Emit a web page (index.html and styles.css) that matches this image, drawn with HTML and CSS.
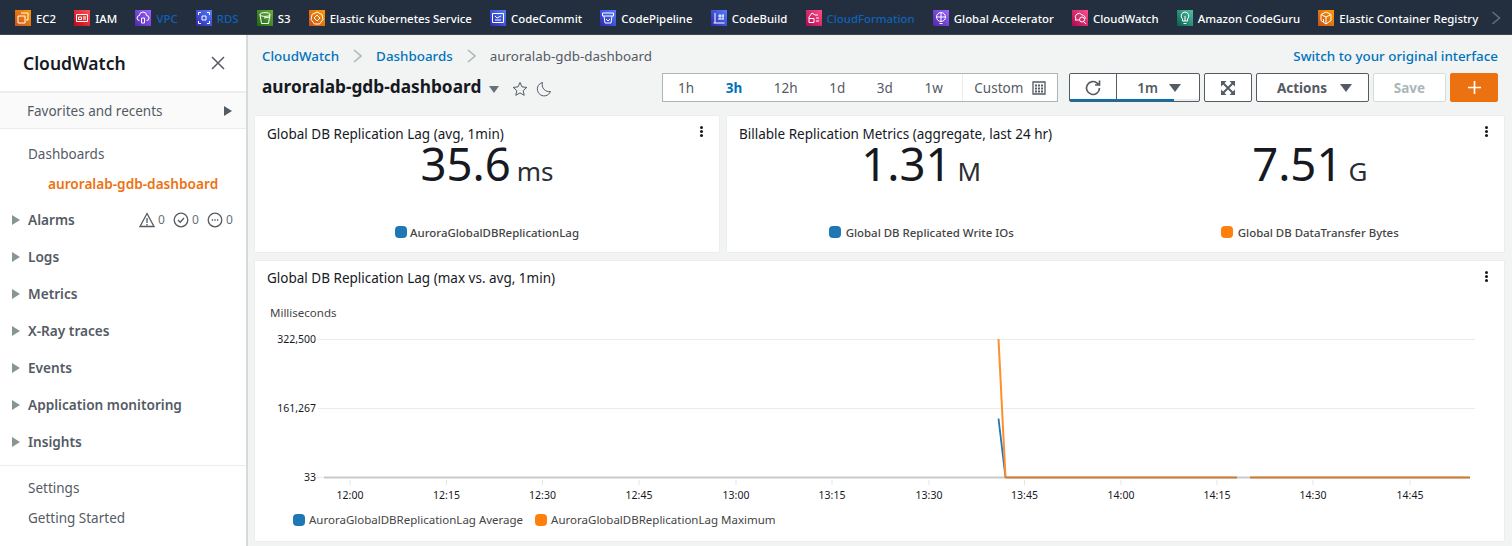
FILE: index.html
```html
<!DOCTYPE html>
<html lang="en">
<head>
<meta charset="utf-8">
<title>CloudWatch</title>
<link rel="stylesheet" href="styles.css">
</head>
<body>
<nav class="topbar">
  <a class="svc"><svg class="ico orange" viewBox="0 0 16 16"><path d="M6 3h7v7h-2M3 6h7v7H3z"/></svg><span>EC2</span></a>
  <a class="svc"><svg class="ico red" viewBox="0 0 16 16"><path d="M2.5 4.500h11v7h-11zM4.500 7h3v2.500h-3zM9 7h3M9 9h3"/></svg><span>IAM</span></a>
  <a class="svc"><svg class="ico violet" viewBox="0 0 16 16"><path d="M4.500 10.500a2.500 2.500 0 0 1 0-5 3.500 3.500 0 0 1 7 0 2.500 2.500 0 0 1 0 5M6.500 8v5h3V8z"/></svg><span class="dim">VPC</span></a>
  <a class="svc"><svg class="ico blue" viewBox="0 0 16 16"><path d="M6 6h4v4H6zM2.500 5V2.500H5M11 2.500h2.500V5M13.500 11v2.500H11M5 13.500H2.500V11"/></svg><span class="dim">RDS</span></a>
  <a class="svc"><svg class="ico green" viewBox="0 0 16 16"><path d="M3 4.500c0-2.500 10-2.500 10 0l-1.500 9h-7zM3 4.500c0 2.500 10 2.500 10 0M7 8l6-1"/></svg><span>S3</span></a>
  <a class="svc"><svg class="ico orange" viewBox="0 0 16 16"><path d="M8 2l5 2.500 1 5-3.500 4.500h-5L2 9.500l1-5zM8 5l3 3-3 3-3-3z"/></svg><span>Elastic Kubernetes Service</span></a>
  <a class="svc"><svg class="ico blue" viewBox="0 0 16 16"><path d="M2.500 3.500h11v9h-11zM5 6l2 2 4-2M5 10h6"/></svg><span>CodeCommit</span></a>
  <a class="svc"><svg class="ico blue" viewBox="0 0 16 16"><path d="M2.500 3h11v3h-11zM4 6l1 7h6l1-7M6 9l2 2 2-2"/></svg><span>CodePipeline</span></a>
  <a class="svc"><svg class="ico blue" viewBox="0 0 16 16"><path d="M4 3v10M2.500 13h11M7 6h6M7 9h6M9 4v5M12 4v5"/></svg><span>CodeBuild</span></a>
  <a class="svc"><svg class="ico pink" viewBox="0 0 16 16"><path d="M3 8.500V7l3-4 3 2h3M3 8.500h5v4H3zM10 8h3M10 11h3"/></svg><span class="dim">CloudFormation</span></a>
  <a class="svc"><svg class="ico violet" viewBox="0 0 16 16"><path d="M8 2.500a4.500 4.500 0 1 1 0 9 4.500 4.500 0 0 1 0-9zM8 2.500v9M3.500 7h9M6.500 13.500h3"/></svg><span>Global Accelerator</span></a>
  <a class="svc"><svg class="ico pink" viewBox="0 0 16 16"><path d="M3 10l1-1a3.500 3.500 0 0 1 6-4 3 3 0 0 1 3 4M3 10h5M10 7a2.500 2.500 0 1 0 .1 5 2.500 2.500 0 0 0-.1-5zM12 12l2 2"/></svg><span>CloudWatch</span></a>
  <a class="svc"><svg class="ico teal" viewBox="0 0 16 16"><path d="M8 2a4 4 0 0 1 2.500 7v2h-5V9A4 4 0 0 1 8 2zM6.500 13.500h3M8 6v5"/></svg><span>Amazon CodeGuru</span></a>
  <a class="svc"><svg class="ico orange" viewBox="0 0 16 16"><path d="M8 2l5 2.500v6L8 14l-5-3.500v-6zM3 4.500L8 7l5-2.500M8 7v7M5.500 9v3"/></svg><span>Elastic Container Registry</span></a>
  <svg class="more" viewBox="0 0 10 14"><path d="M1.500 1l7 6-7 6"/></svg>
</nav>

<div class="shell">
  <aside class="side">
    <header class="side-head">
      <h2>CloudWatch</h2>
      <svg class="close" viewBox="0 0 14 14"><path d="M1 1l12 12M13 1L1 13"/></svg>
    </header>
    <div class="favs"><span>Favorites and recents</span><i class="tri tri-dark"></i></div>
    <div class="links first">
      <a class="link">Dashboards</a>
      <a class="link current">auroralab-gdb-dashboard</a>
    </div>
    <ul class="groups">
      <li class="group"><i class="tri"></i><span>Alarms</span>
        <div class="alarms">
          <svg viewBox="0 0 16 16"><path d="M8 1.500L15 14.500H1zM8 6v5M8 12v1.500"/></svg><b>0</b>
          <svg viewBox="0 0 16 16"><circle cx="8" cy="8" r="6.800"/><path d="M5 8l2.200 2.200L11 6"/></svg><b>0</b>
          <svg viewBox="0 0 16 16"><circle cx="8" cy="8" r="6.800"/><path class="dots" d="M4.700 8h1.400M7.300 8h1.400M9.900 8h1.400"/></svg><b>0</b>
        </div>
      </li>
      <li class="group"><i class="tri"></i><span>Logs</span></li>
      <li class="group"><i class="tri"></i><span>Metrics</span></li>
      <li class="group"><i class="tri"></i><span>X-Ray traces</span></li>
      <li class="group"><i class="tri"></i><span>Events</span></li>
      <li class="group"><i class="tri"></i><span>Application monitoring</span></li>
      <li class="group"><i class="tri"></i><span>Insights</span></li>
    </ul>
    <div class="links last">
      <a class="link">Settings</a>
      <a class="link">Getting Started</a>
    </div>
  </aside>

  <main class="main">
    <div class="crumbs">
      <a>CloudWatch</a><svg class="sep" viewBox="0 0 9 14"><path d="M1 1l7 6-7 6"/></svg>
      <a>Dashboards</a><svg class="sep" viewBox="0 0 9 14"><path d="M1 1l7 6-7 6"/></svg>
      <span>auroralab-gdb-dashboard</span>
      <a class="switch">Switch to your original interface</a>
    </div>
    <div class="toolbar">
      <h1>auroralab-gdb-dashboard</h1>
      <i class="down title-down"></i>
      <svg class="star" viewBox="0 0 16 16"><path d="M8 1.500l2 4.400 4.800.5-3.600 3.200 1 4.700L8 11.900l-4.200 2.400 1-4.700L1.200 6.400 6 5.900z"/></svg>
      <svg class="moon" viewBox="0 0 16 16"><path d="M6.500 1.500a6.800 6.800 0 1 0 8 9 7 7 0 0 1-8-9z"/></svg>
      <div class="range">
        <span>1h</span><span class="on">3h</span><span>12h</span><span>1d</span><span>3d</span><span>1w</span>
        <span class="custom">Custom
          <svg viewBox="0 0 14 14"><path class="cal" d="M1 1h12v12H1z"/><path class="calg" d="M3 4.500h2M6 4.500h2M9 4.500h2M3 7.500h2M6 7.500h2M9 7.500h2M3 10.500h2M6 10.500h2M9 10.500h2"/></svg>
        </span>
      </div>
      <div class="refresh">
        <span class="r-btn"><svg viewBox="0 0 18 18"><path d="M15.500 9a6.500 6.500 0 1 1-2-4.700L15.500 6M15.500 1.500V6H11"/></svg></span>
        <span class="r-int">1m <i class="down"></i></span>
      </div>
      <button class="btn icon"><svg viewBox="0 0 16 16"><path class="x" d="M3 3l10 10M13 3L3 13"/><path class="heads" d="M1 1h5.500L1 6.500zM15 1v5.500L9.500 1zM1 15V9.500L6.500 15zM15 15H9.500L15 9.500z"/></svg></button>
      <button class="btn actions">Actions <i class="down"></i></button>
      <button class="btn save">Save</button>
      <button class="btn plus"><svg viewBox="0 0 16 16"><path d="M8 1v14M1 8h14"/></svg></button>
    </div>

    <div class="row">
      <section class="card lag">
        <h3>Global DB Replication Lag (avg, 1min)</h3>
        <i class="kebab"></i>
        <div class="stats">
          <div class="stat"><div class="val">35.6<small>ms</small></div><div class="lg"><i class="sw b"></i>AuroraGlobalDBReplicationLag</div></div>
        </div>
      </section>
      <section class="card bill">
        <h3>Billable Replication Metrics (aggregate, last 24 hr)</h3>
        <i class="kebab"></i>
        <div class="stats">
          <div class="stat"><div class="val">1.31<small>M</small></div><div class="lg"><i class="sw b"></i>Global DB Replicated Write IOs</div></div>
          <div class="stat"><div class="val">7.51<small>G</small></div><div class="lg"><i class="sw o"></i>Global DB DataTransfer Bytes</div></div>
        </div>
      </section>
    </div>

    <section class="card wide">
      <h3>Global DB Replication Lag (max vs. avg, 1min)</h3>
      <i class="kebab"></i>
      <p class="unit">Milliseconds</p>
      <svg class="plot" viewBox="0 -8 1249 184" width="1249" height="184">
        <g class="grid"><path d="M63 5.500h1157M63 74.500h1157"/><path d="M60 143.500h9"/></g>
        <g class="ylab"><text x="61" y="9">322,500</text><text x="61" y="78">161,267</text><text x="61" y="147">33</text></g>
        <path class="baseline" d="M69 143.500H1215"/>
        <g class="ticks"><path d="M95 146v5M191.500 146v5M287.500 146v5M384 146v5M481 146v5M577 146v5M674 146v5M769.500 146v5M866 146v5M962 146v5M1058 146v5M1155 146v5"/></g>
        <g class="xlab"><text x="95" y="165">12:00</text><text x="191.500" y="165">12:15</text><text x="287.500" y="165">12:30</text><text x="384" y="165">12:45</text><text x="481" y="165">13:00</text><text x="577" y="165">13:15</text><text x="674" y="165">13:30</text><text x="769.500" y="165">13:45</text><text x="866" y="165">14:00</text><text x="962" y="165">14:15</text><text x="1058" y="165">14:30</text><text x="1155" y="165">14:45</text></g>
        <path class="ln-b" d="M743.500 84.500L750.500 143.500"/>
        <path class="ln-o" d="M743.500 5L750.500 143.500"/>
        <path class="ln-m" d="M750.500 143.500H982M995 143.500H1215"/>
      </svg>
      <div class="legend">
        <span><i class="sw b"></i>AuroraGlobalDBReplicationLag Average</span>
        <span><i class="sw o"></i>AuroraGlobalDBReplicationLag Maximum</span>
      </div>
    </section>
  </main>
</div>
</body>
</html>
```

FILE: styles.css
```css
* { box-sizing: border-box; }
html, body { margin: 0; height: 100%; overflow: hidden; }
body { font-family: "Noto Sans", "Open Sans", sans-serif; font-size: 14px; color: #16191f; background: #f2f3f3; }
a { cursor: pointer; }

.topbar { height: 35px; background: #232f3e; border-bottom: 1px solid #3c4654; display: flex; align-items: center; padding: 2px 0 0 15px; gap: 18.2px; color: #fff; font-size: 11.4px; font-weight: 500; white-space: nowrap; }
.svc { display: flex; align-items: center; gap: 5px; }
.svc .dim { color: #0f62b8; }
.ico { width: 16px; height: 16px; flex: none; fill: none; stroke: #fff; stroke-width: 1; }
.orange { background: linear-gradient(45deg, #c8511b, #ff9900); }
.red { background: linear-gradient(45deg, #bd0816, #ff5252); }
.violet { background: linear-gradient(45deg, #4d27a8, #a166ff); }
.blue { background: linear-gradient(45deg, #2e27ad, #527fff); }
.green { background: linear-gradient(45deg, #1b660f, #6cae3e); }
.pink { background: linear-gradient(45deg, #b0084d, #ff4f8b); }
.teal { background: linear-gradient(45deg, #055f4e, #56c0a7); }
.more { width: 10px; height: 14px; margin-left: -5px; fill: none; stroke: #687078; stroke-width: 1.500; flex: none; }

.shell { display: flex; height: 511px; }
.side { width: 248px; flex: none; background: #fff; border-right: 2px solid #d5dbdb; color: #545b64; }
.side-head { height: 58px; padding: 0 21px 0 23px; display: flex; align-items: center; justify-content: space-between; border-bottom: 2px solid #eaeded; }
.side-head h2 { margin: 0; font-size: 17.500px; font-weight: 600; color: #16191f; }
.close { width: 14px; height: 14px; fill: none; stroke: #545b64; stroke-width: 1.500; }
.favs { height: 36px; background: #fafafa; border-bottom: 1px solid #eaeded; padding: 0 14px 0 27px; display: flex; align-items: center; justify-content: space-between; font-size: 13.500px; }
.tri { width: 0; height: 0; border-left: 8px solid #879596; border-top: 5px solid transparent; border-bottom: 5px solid transparent; flex: none; }
.tri-dark { border-left-color: #545b64; }
.links { display: flex; flex-direction: column; padding-left: 28px; font-size: 13.500px; }
.link { height: 30px; display: flex; align-items: center; }
.links.first { padding-top: 10px; }
.link.current { color: #ec7211; font-weight: 600; padding-left: 20px; font-size: 13.650px; height: 28px; }
.groups { list-style: none; margin: 0; padding: 4px 0 5px 0; border-bottom: 1px solid #eaeded; }
.group { height: 37px; display: flex; align-items: center; padding-left: 12px; gap: 8px; font-weight: 600; font-size: 13.650px; }
.alarms { margin-left: auto; padding-right: 13px; display: flex; align-items: center; font-weight: 400; font-size: 12px; color: #687078; }
.alarms svg { width: 16px; height: 16px; fill: none; stroke: #545b64; stroke-width: 1.300; margin-right: 3px; }
.alarms b { font-weight: 400; margin-right: 8px; width: 7px; }
.alarms b:last-child { margin-right: 0; }
.dots { stroke-width: 1.500; }
.links.last { padding-top: 7px; }

.main { flex: 1; min-width: 0; padding: 0 8px 0 7px; }
.crumbs { height: 37px; padding: 5px 6px 0 7px; display: flex; align-items: center; font-size: 13.400px; color: #545b64; }
.crumbs a { color: #0073bb; font-weight: 500; }
.sep { width: 9px; height: 14px; margin: 0 14px; fill: none; stroke: #aab7b8; stroke-width: 1.500; flex: none; }
.crumbs .switch { margin-left: auto; }

.toolbar { height: 29px; margin-top: 1px; padding: 0 6px 0 7px; display: flex; align-items: center; }
.toolbar > * { flex: none; }
.toolbar h1 { margin: -2px 0 0; font-size: 17.300px; font-weight: 700; color: #16191f; white-space: nowrap; }
.down { display: inline-block; width: 0; height: 0; border-top: 8px solid #545b64; border-left: 6.500px solid transparent; border-right: 6.500px solid transparent; }
.title-down { margin: 3px 0 0 8px; border-top-width: 7px; border-left-width: 5.500px; border-right-width: 5.500px; border-top-color: #687078; }
.star, .moon { width: 16px; height: 16px; fill: none; stroke: #545b64; stroke-width: 1; margin-top: 2px; }
.star { margin-left: 13px; }
.moon { margin-left: 8px; }
.range { margin-left: auto; width: 396px; height: 29px; background: #fff; border: 1px solid #aab7b8; display: flex; align-items: center; gap: 31.6px; padding-left: 15px; color: #545b64; font-size: 13.500px; }
.range > span { flex: none; padding-top: 1px; }
.range .on { color: #0073bb; font-weight: 700; }
.range .custom { margin-left: -12px; width: 95px; height: 27px; border-left: 1px solid #eaeded; display: flex; align-items: center; justify-content: center; gap: 9px; }
.custom svg { width: 14px; height: 14px; fill: none; stroke: #545b64; }
.custom .cal { stroke-width: 1.300; }
.custom .calg { stroke-width: 2; }
.refresh { margin-left: 11px; width: 131px; height: 29px; display: flex; background: #fff; border: 1px solid #545b64; border-radius: 2px; color: #545b64; font-weight: 600; font-size: 13.500px; box-shadow: inset 0 -2px 0 #eaeded; }
.r-btn { width: 47px; border-right: 1px solid #545b64; display: flex; align-items: center; justify-content: center; box-shadow: inset 0 -2px 0 #0073bb; }
.r-btn svg { width: 18px; height: 18px; fill: none; stroke: #545b64; stroke-width: 1.700; }
.r-int { flex: 1; display: flex; align-items: center; justify-content: center; gap: 11px; padding-left: 2px; background: linear-gradient(#0073bb, #0073bb) left bottom / 70% 2px no-repeat; }
.btn { height: 29px; margin-left: 4px; padding: 0; font: inherit; font-size: 13.500px; font-weight: 700; background: #fff; border: 1px solid #545b64; border-radius: 2px; color: #545b64; display: flex; align-items: center; justify-content: center; }
.btn.icon { width: 48px; }
.btn.icon svg { width: 16px; height: 16px; }
.btn.icon .x { fill: none; stroke: #545b64; stroke-width: 2; }
.btn.icon .heads { fill: #545b64; stroke: none; }
.btn.actions { width: 113px; gap: 13px; padding-left: 4px; }
.btn.save { width: 73px; color: #aab7b8; border-color: #d5dbdb; }
.btn.plus { width: 48px; background: #ec7211; border-color: #ec7211; }
.plus svg { width: 15px; height: 15px; fill: none; stroke: #fff; stroke-width: 1.800; }

.row { display: flex; gap: 8px; margin-top: 14px; }
.card { background: #fff; position: relative; box-shadow: 0 0 1px rgba(0,28,36,.15); }
.card h3 { margin: 0; font-size: 13.500px; font-weight: 400; color: #16191f; padding: 9px 0 0 12px; line-height: 18px; }
.wide h3 { padding-top: 8px; }
.kebab { position: absolute; top: 10px; right: 16px; width: 3px; height: 3px; border-radius: 50%; background: #16191f; box-shadow: 0 4px 0 #16191f, 0 8px 0 #16191f; }
.lag { width: 464px; height: 136px; }
.bill { width: 777px; height: 136px; }
.stats { display: flex; }
.stat { flex: 1; text-align: center; }
.val { font-size: 45.500px; line-height: 50px; color: #16191f; margin-top: -5px; height: 84px; }
.val small { font-size: 26px; margin-left: 6px; color: #2a2e33; }
.lg { font-size: 11.450px; font-weight: 500; color: #444; display: flex; align-items: center; justify-content: center; gap: 3px; height: 20px; }
.sw { display: inline-block; width: 12px; height: 12px; border-radius: 4px; }
.sw.b { background: #1f77b4; }
.sw.o { background: #ff7f0e; }
.bill .lg { gap: 5px; }

.wide { height: 280px; margin-top: 9px; }
.unit { margin: 18px 0 0 15px; font-size: 11.500px; line-height: 16px; color: #444; }
.plot { display: block; margin-top: 5px; }
.grid path { fill: none; stroke: #e9ebed; stroke-width: 1; }
.ticks path { stroke: #e1e4e8; stroke-width: 1; }
.baseline { stroke: #c9c9c9; stroke-width: 2; }
.ylab text { text-anchor: end; font-size: 10.500px; fill: #16191f; }
.xlab text { text-anchor: middle; font-size: 10.500px; fill: #16191f; }
.ln-b { stroke: #1f77b4; stroke-width: 1.800; fill: none; }
.ln-o { stroke: #ff8f2e; stroke-width: 2; fill: none; }
.ln-m { stroke: #cb7d32; stroke-width: 2; fill: none; }
.legend { display: flex; gap: 12px; padding: 2px 0 0 38px; font-size: 11.500px; color: #444; }
.legend span { display: flex; align-items: center; gap: 4px; }
```
